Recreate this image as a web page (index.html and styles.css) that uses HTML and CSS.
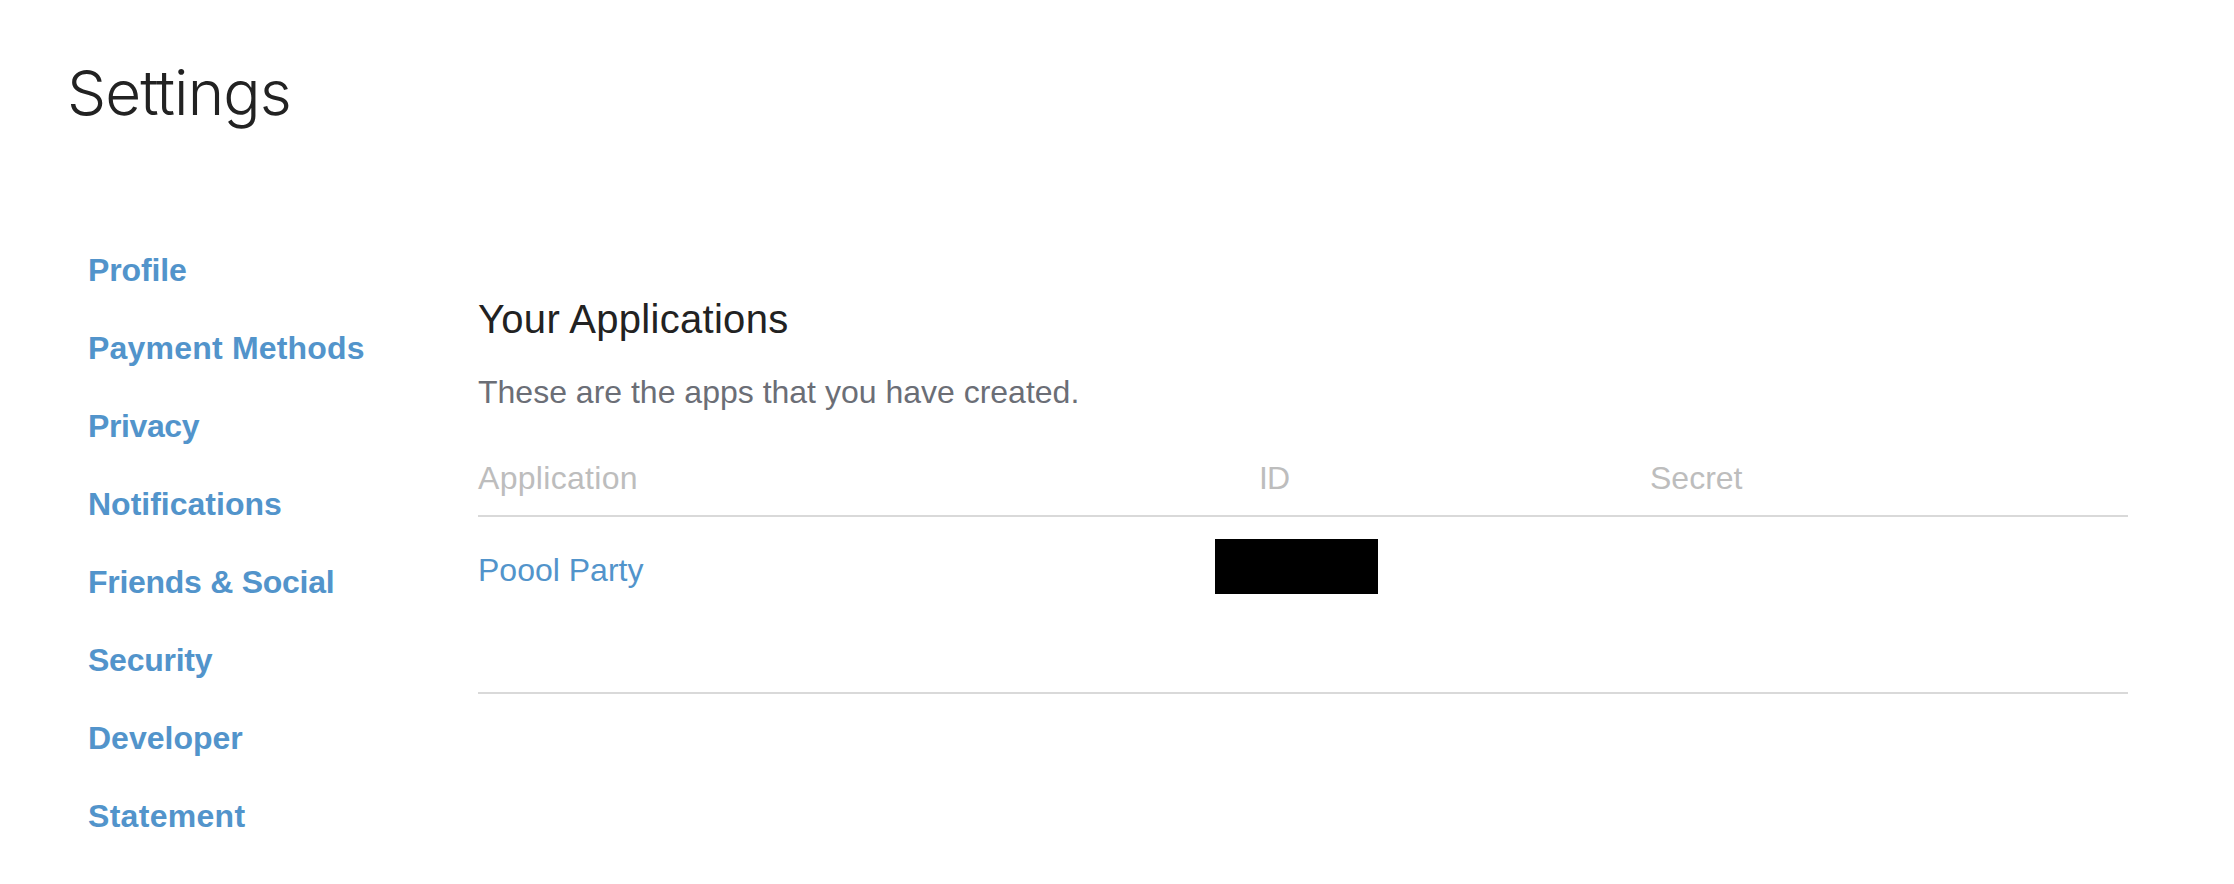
FILE: index.html
```
<!DOCTYPE html>
<html lang="en">
<head>
<meta charset="utf-8">
<title>Settings</title>
<link rel="stylesheet" href="styles.css">
</head>
<body>
<h1 class="page-title">Settings</h1>
<div class="layout">
  <nav class="sidebar">
    <a class="nav-link profile">Profile</a>
    <a class="nav-link payment">Payment Methods</a>
    <a class="nav-link privacy">Privacy</a>
    <a class="nav-link">Notifications</a>
    <a class="nav-link friends">Friends &amp; Social</a>
    <a class="nav-link security">Security</a>
    <a class="nav-link">Developer</a>
    <a class="nav-link statement">Statement</a>
  </nav>
  <main class="content">
    <h2 class="section-title">Your Applications</h2>
    <p class="section-text">These are the apps that you have created.</p>
    <div class="row head"><span class="col-app">Application</span><span class="col-id">ID</span><span>Secret</span></div>
    <div class="row item"><a class="app-link">Poool Party</a><span class="redacted"></span></div>
  </main>
</div>
</body>
</html>
```
FILE: styles.css
```
* { box-sizing: border-box; }
body { margin: 0; background: #fff; color: #222; font-family: "Liberation Sans", Arial, sans-serif; }
.page-title { margin: 0; padding: 53px 0 0 67px; height: 231px; font-family: Inter, sans-serif; font-size: 62px; line-height: 80px; font-weight: 300; letter-spacing: -0.9px; }
.layout { display: flex; }
.sidebar { width: 478px; padding-left: 88px; display: flex; flex-direction: column; }
.nav-link { height: 78px; line-height: 78px; font-size: 32px; font-weight: 700; color: #5294cb; white-space: nowrap; }
.profile { letter-spacing: -0.15px; }
.payment { letter-spacing: 0.2px; }
.privacy { letter-spacing: -0.4px; }
.friends { letter-spacing: -0.28px; }
.security { letter-spacing: -0.25px; }
.statement { letter-spacing: 0.3px; }
.content { width: 1650px; padding-top: 64px; }
.section-title { margin: 0; font-size: 40px; line-height: 48px; padding-bottom: 2px; font-weight: 400; letter-spacing: 0.3px; }
.section-text { margin: 27px 0 0; font-size: 32px; line-height: 40px; color: #6b6e76; }
.row { display: grid; grid-template-columns: 782px 390px 1fr; border-bottom: 2px solid #d9d9d9; font-size: 32px; }
.head { margin-top: 33px; height: 72px; line-height: 66px; color: #bdbdbd; }
.col-app { letter-spacing: 0.3px; }
.col-id { letter-spacing: -1px; margin-left: -1px; }
.item { height: 177px; color: #5294cb; line-height: 106px; }
.redacted { width: 163px; height: 55px; margin: 22px 0 0 -45px; background: #000; }
```
